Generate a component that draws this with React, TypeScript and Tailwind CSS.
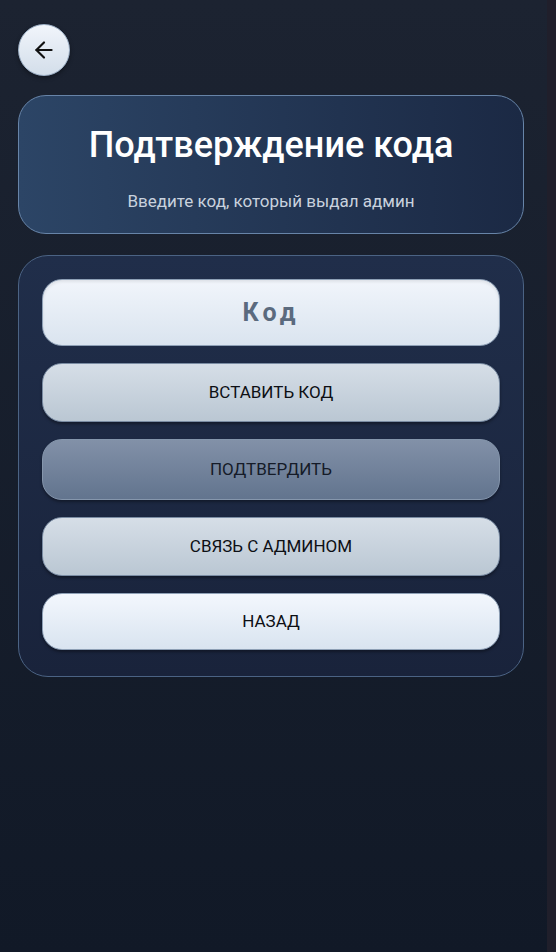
import React from "react";

export default function App() {
  return (
    <div className="flex min-h-[952px] w-full" style={{ fontFamily: "Roboto, 'Noto Sans', sans-serif" }}>
      <div className="flex-1 min-h-[952px] bg-gradient-to-b from-[#1c2331] to-[#111927] pl-[18px] pr-[23px] pt-[24px]">
        <button className="flex h-[52px] w-[52px] items-center justify-center rounded-full border border-[#9fb2c8] bg-gradient-to-b from-[#f1f5fb] to-[#d3deea] shadow-[0_2px_4px_rgba(0,0,0,0.35)]">
          <svg width="26" height="26" viewBox="0 0 24 24" fill="none" stroke="#111" strokeWidth="2" strokeLinecap="round" strokeLinejoin="round">
            <path d="M19 12H5" />
            <path d="M12 19l-7-7 7-7" />
          </svg>
        </button>

        <div className="mt-[19px] flex h-[139px] flex-col items-center rounded-[28px] border border-[#6784a8] bg-gradient-to-r from-[#2c4566] to-[#1b2944] pt-[27px]">
          <h1 className="text-[36px] font-medium leading-[44px] text-white">Подтверждение кода</h1>
          <p className="mt-[23px] text-[17px] leading-[22px] text-[#c9d2de]">Введите код, который выдал админ</p>
        </div>

        <div className="mt-[21px] flex flex-col gap-[17px] rounded-[30px] border border-[#4b6384] bg-gradient-to-b from-[#202e4a] to-[#19233b] px-[23px] pb-[26px] pt-[23px]">
          <div className="flex h-[67px] items-center justify-center rounded-[20px] border border-[#8ea0b6] bg-gradient-to-b from-[#f1f5fb] to-[#dae4ef] shadow-[inset_0_2px_3px_rgba(0,0,0,0.08)]">
            <span className="text-[25px] font-bold tracking-[4px] text-[#5b6a7e]">Код</span>
          </div>
          <button className="flex h-[59px] items-center justify-center rounded-[20px] border border-[#7a8ca3] bg-gradient-to-b from-[#d6dee7] to-[#bac7d3] text-[17px] font-normal text-[#0d0f14] shadow-[0_2px_3px_rgba(0,0,0,0.35)]">
            ВСТАВИТЬ КОД
          </button>
          <button className="flex h-[61px] items-center justify-center rounded-[20px] border border-[#8596ac] bg-gradient-to-b from-[#8291a8] to-[#62748e] text-[17px] font-normal text-[#151b28] shadow-[0_2px_3px_rgba(0,0,0,0.35)]">
            ПОДТВЕРДИТЬ
          </button>
          <button className="flex h-[59px] items-center justify-center rounded-[20px] border border-[#7a8ca3] bg-gradient-to-b from-[#d6dee7] to-[#bac7d3] text-[17px] font-normal text-[#0d0f14] shadow-[0_2px_3px_rgba(0,0,0,0.35)]">
            СВЯЗЬ С АДМИНОМ
          </button>
          <button className="flex h-[57px] items-center justify-center rounded-[20px] border border-[#8ea0b6] bg-gradient-to-b from-[#f3f7fd] to-[#d9e4f0] text-[17px] font-normal text-[#0d0f14] shadow-[0_2px_3px_rgba(0,0,0,0.35)]">
            НАЗАД
          </button>
        </div>
      </div>
      <div className="w-[9px] min-h-[952px] bg-[#201f2b]" />
    </div>
  );
}
